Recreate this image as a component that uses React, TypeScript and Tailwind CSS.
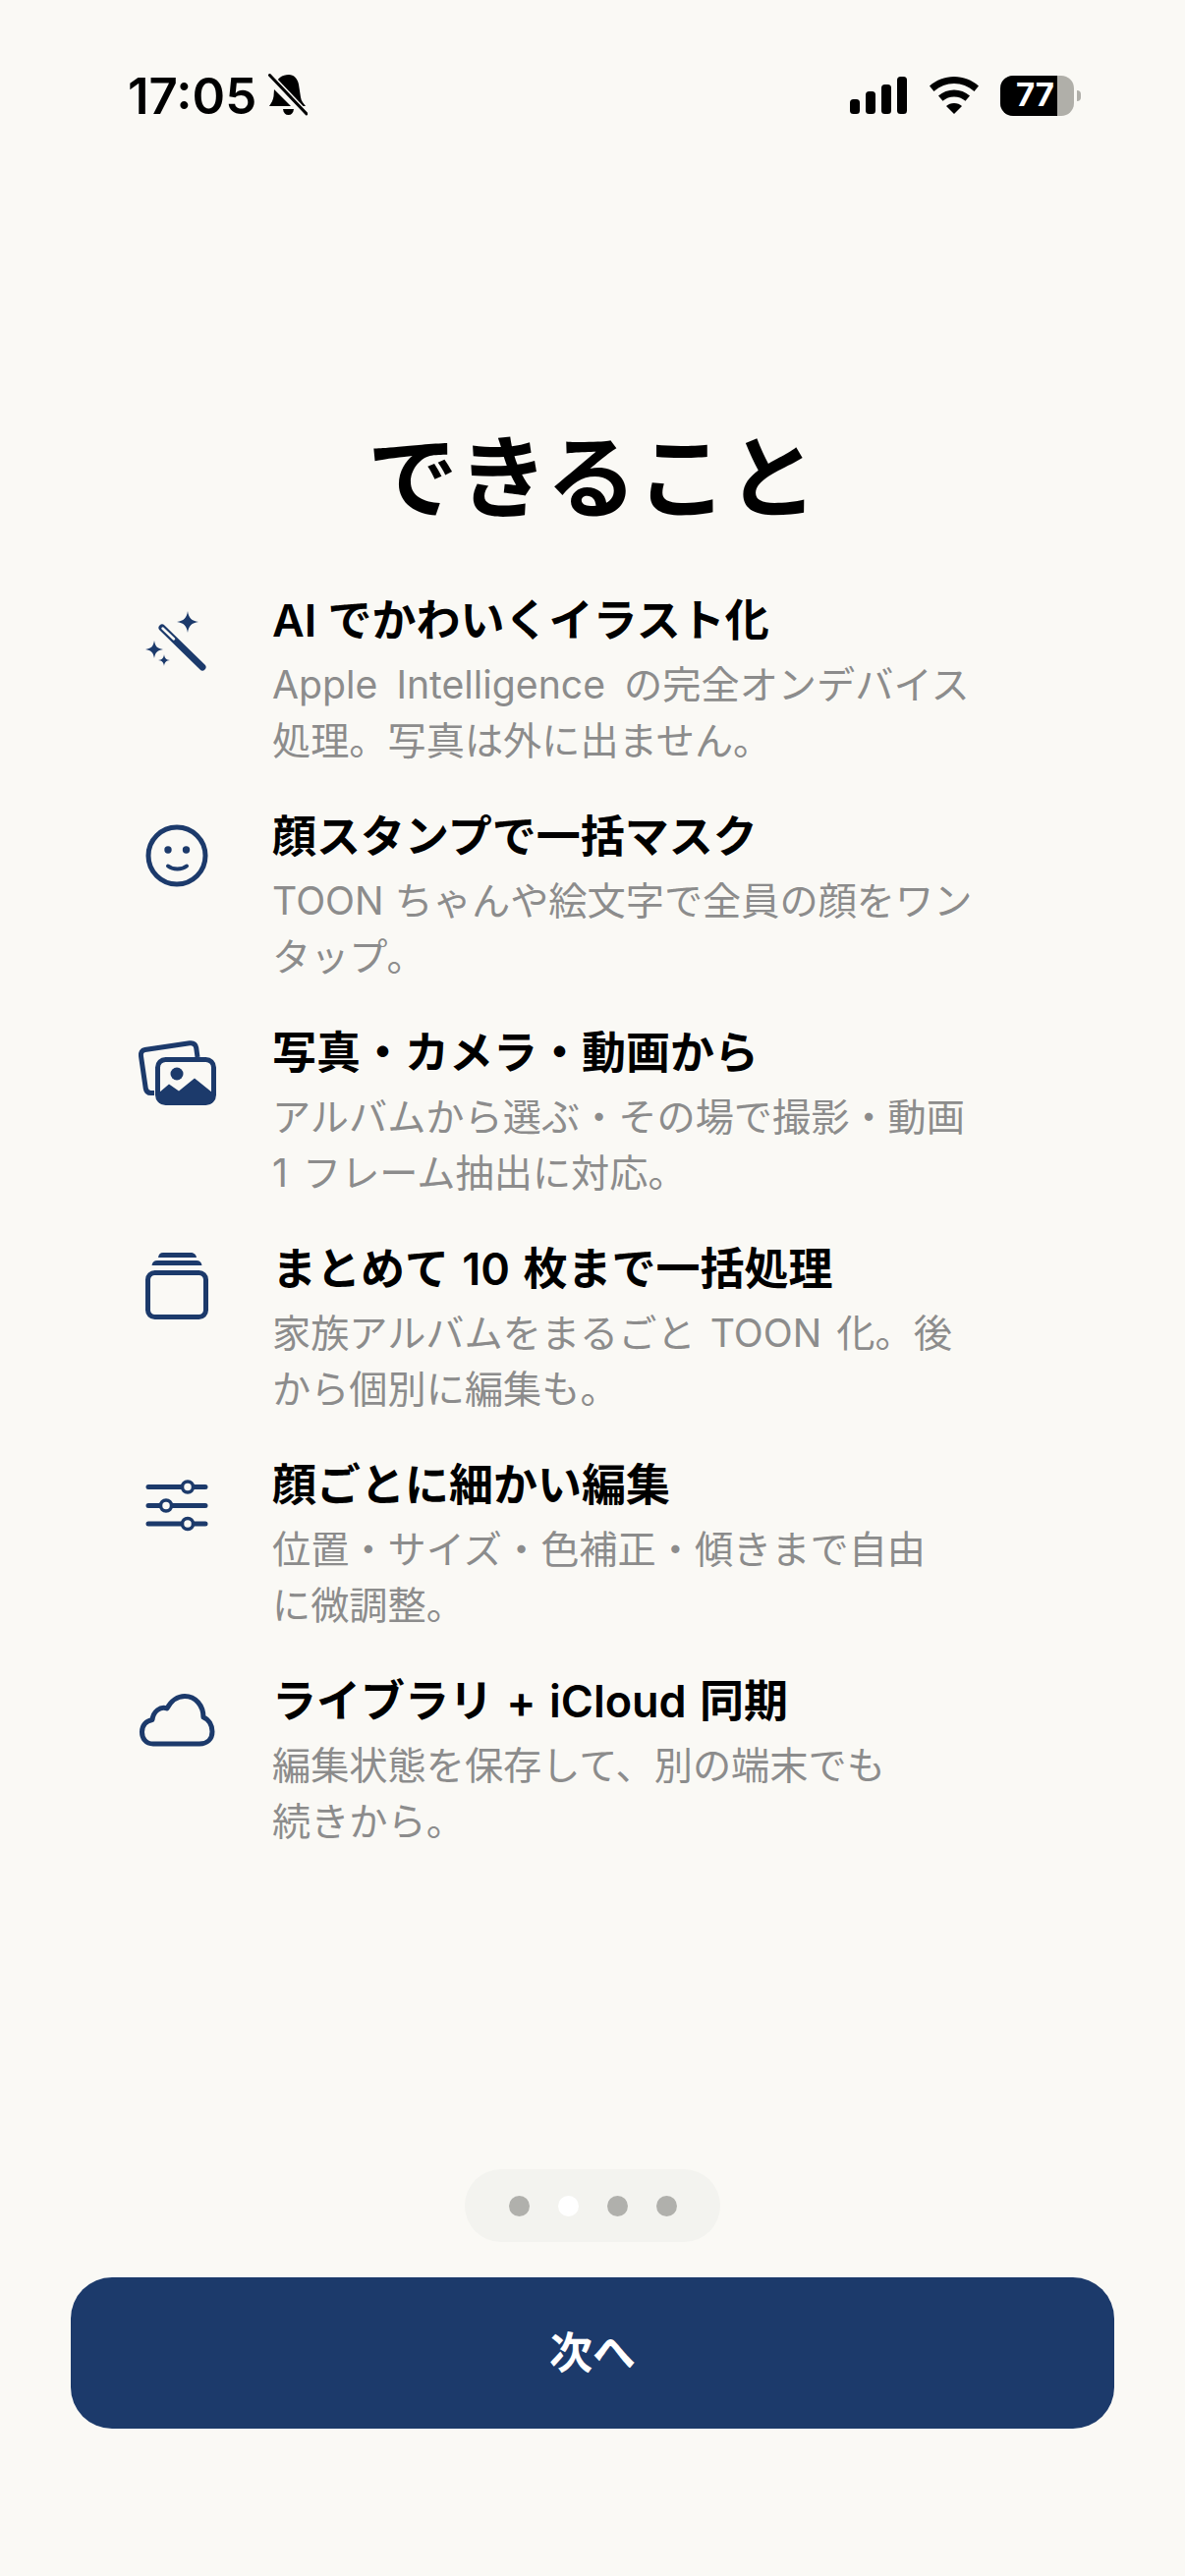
const features = [
  {
    title: "AI でかわいくイラスト化",
    lines: ["Apple Intelligence の完全オンデバイス", "処理。写真は外に出ません。"],
    titleClass: "",
    lineClass: "[word-spacing:8px]",
    icon: <WandIcon />,
  },
  {
    title: "顔スタンプで一括マスク",
    lines: ["TOON ちゃんや絵文字で全員の顔をワン", "タップ。"],
    titleClass: "",
    lineClass: "",
    icon: <SmileIcon />,
  },
  {
    title: "写真・カメラ・動画から",
    lines: ["アルバムから選ぶ・その場で撮影・動画", "1 フレーム抽出に対応。"],
    titleClass: "",
    lineClass: "[word-spacing:4px]",
    icon: <PhotosIcon />,
  },
  {
    title: "まとめて 10 枚まで一括処理",
    lines: ["家族アルバムをまるごと TOON 化。後", "から個別に編集も。"],
    titleClass: "[word-spacing:2px]",
    lineClass: "[word-spacing:4px]",
    icon: <StackIcon />,
  },
  {
    title: "顔ごとに細かい編集",
    lines: ["位置・サイズ・色補正・傾きまで自由", "に微調整。"],
    titleClass: "",
    lineClass: "",
    icon: <SlidersIcon />,
  },
  {
    title: "ライブラリ + iCloud 同期",
    lines: ["編集状態を保存して、別の端末でも", "続きから。"],
    titleClass: "[word-spacing:2px]",
    lineClass: "",
    icon: <CloudIcon />,
  },
];

function WandIcon() {
  return (
    <svg viewBox="130 600 100 100" className="w-[100px] h-[100px] text-[#1c3a6b]" fill="currentColor">
      <path d="M191 620 C192 627 195 630 202 631 C195 632 192 635 191 642 C190 635 187 632 180 631 C187 630 190 627 191 620Z" />
      <path d="M157 650 C158 656 160 658 166 659 C160 660 158 662 157 668 C156 662 154 660 148 659 C154 658 156 656 157 650Z" />
      <path d="M167 664 C167.500 668 169 669.500 173 670 C169 670.500 167.500 672 167 676 C166.500 672 165 670.500 161 670 C165 669.500 166.500 668 167 664Z" />
      <path d="M165 637 L206 677" stroke="currentColor" strokeWidth="7" strokeLinecap="round" />
      <path d="M165.500 637.500 L177 648.500" stroke="#faf9f5" strokeWidth="2.500" strokeLinecap="round" />
    </svg>
  );
}

function SmileIcon() {
  return (
    <svg viewBox="130 821 100 100" className="w-[100px] h-[100px] text-[#1c3a6b]" fill="none" stroke="currentColor" strokeWidth="5">
      <circle cx="180" cy="870" r="29" />
      <circle cx="171" cy="864" r="3.700" fill="currentColor" stroke="none" />
      <circle cx="189.500" cy="864" r="3.700" fill="currentColor" stroke="none" />
      <path d="M171 880.500 C176 884.500 185 884.500 190 880.500" strokeLinecap="round" strokeWidth="4" />
    </svg>
  );
}

function PhotosIcon() {
  return (
    <svg viewBox="130 1041 100 100" className="w-[100px] h-[100px] text-[#1c3a6b]" fill="none" stroke="currentColor" strokeWidth="5">
      <path d="M157 1111.500 L153.500 1111.500 C150.500 1111.500 148.800 1110 148.300 1107 L143.500 1074 C143 1070.500 144.500 1068 147.500 1067.500 L193 1060.800 C196.800 1060.300 199 1062 199.700 1065.500 L201 1075" strokeLinejoin="round" />
      <rect x="160.500" y="1077.500" width="57" height="44" rx="8" />
      <circle cx="180" cy="1092" r="6.500" fill="currentColor" stroke="none" />
      <path d="M162 1111 L172 1102.500 L182 1109.500 L198 1096.500 L216 1111 L216 1122 L162 1122Z" fill="currentColor" stroke="none" />
    </svg>
  );
}

function StackIcon() {
  return (
    <svg viewBox="130 1261 100 100" className="w-[100px] h-[100px] text-[#1c3a6b]" fill="none" stroke="currentColor" strokeWidth="5">
      <rect x="150.500" y="1294.500" width="59" height="45" rx="7" />
      <path d="M154.500 1287 C155 1283.500 157 1282 160 1282 L200 1282 C203 1282 205 1283.500 205.500 1287Z" fill="currentColor" stroke="none" />
      <path d="M161 1279 C161.500 1275.500 163 1274 166 1274 L194 1274 C197 1274 199.500 1275.500 200 1279Z" fill="currentColor" stroke="none" />
    </svg>
  );
}

function SlidersIcon() {
  return (
    <svg viewBox="130 1480 100 100" className="w-[100px] h-[100px] text-[#1c3a6b]" fill="none" stroke="currentColor" strokeWidth="5" strokeLinecap="round">
      <path d="M151 1511.500 H209 M151 1530.500 H209 M151 1549 H209" />
      <circle cx="191" cy="1511.500" r="5.500" fill="#faf9f5" strokeWidth="3.500" />
      <circle cx="169" cy="1530.500" r="5.500" fill="#faf9f5" strokeWidth="3.500" />
      <circle cx="191" cy="1549" r="5.500" fill="#faf9f5" strokeWidth="3.500" />
    </svg>
  );
}

function CloudIcon() {
  return (
    <svg viewBox="130 1701 100 100" className="w-[100px] h-[100px] text-[#1c3a6b]" fill="none" stroke="currentColor" strokeWidth="5" strokeLinejoin="round">
      <path d="M156 1774 C148 1774 144.500 1768 144.500 1762 C144.500 1755 149 1750.500 155 1749.500 C156 1741 163 1735.500 170 1738 C174 1730 181 1725.500 188 1725.500 C199 1725.500 207 1735 207 1747 C212.500 1749 216 1755 216 1761.500 C216 1769 211 1774 203 1774 Z" />
    </svg>
  );
}

function StatusBar() {
  return (
    <div className="flex items-center justify-between h-[42px] mt-[76px] pl-[130px] pr-[106px] text-black">
      <div className="flex items-center gap-[12px]">
        <span className="text-[51px] leading-none font-semibold font-['Inter',sans-serif]">17:05</span>
        <svg viewBox="0 0 40 44" className="w-[40px] h-[44px]" fill="currentColor">
          <path d="M21 1 C26 1 30 5 31 11 L33 24 C33.500 28 36 30 38 33 L30 33 L7 11 C9 5 14 1 21 1Z" />
          <path d="M6 16 L23 33 L1 33 C3 30 5 27 5.500 23Z" />
          <path d="M15 36 H26 C25.500 40 23.500 42 20.500 42 C17.500 42 15.500 40 15 36Z" />
          <path d="M2 2 L39 41" stroke="#faf9f5" strokeWidth="6" />
          <path d="M1.500 1.500 L39 41" stroke="currentColor" strokeWidth="3" strokeLinecap="round" />
        </svg>
      </div>
      <div className="flex items-center">
        <svg viewBox="0 0 58 38" className="w-[58px] h-[38px]" fill="currentColor">
          <rect x="0" y="23" width="10" height="15" rx="3.500" />
          <rect x="16" y="15" width="10" height="23" rx="3.500" />
          <rect x="32" y="8" width="10" height="30" rx="3.500" />
          <rect x="48" y="0" width="10" height="38" rx="3.500" />
        </svg>
        <svg viewBox="0 0 50 38" className="w-[50px] h-[38px] ml-[23px]" fill="currentColor">
          <path d="M25 0 C34.500 0 43 3.500 50 9.500 L45.500 15 C39.500 9.800 32.500 7 25 7 C17.500 7 10.500 9.800 4.500 15 L0 9.500 C7 3.500 15.500 0 25 0Z" />
          <path d="M25 13.500 C31 13.500 36.500 15.700 41 19.500 L36.500 24.800 C33.200 22 29.300 20.500 25 20.500 C20.700 20.500 16.800 22 13.500 24.800 L9 19.500 C13.500 15.700 19 13.500 25 13.500Z" />
          <path d="M25 27 C28.300 27 30.800 28 33 30 L25 38 L17 30 C19.200 28 21.700 27 25 27Z" />
        </svg>
        <div className="relative w-[75px] h-[41px] ml-[22px] rounded-[13px] overflow-hidden bg-[#b0afa9]">
          <div className="w-[58px] h-full bg-black" />
          <div className="absolute inset-0 flex items-center justify-center pr-[4px] text-white text-[33px] font-bold font-['Inter',sans-serif]">77</div>
        </div>
        <div className="w-[4px] h-[11px] ml-[3px] rounded-r-full bg-[#b0afa9]" />
      </div>
    </div>
  );
}

export default function App() {
  return (
    <div className="flex flex-col w-[1206px] h-[2622px] bg-[#faf9f5] font-['Inter','Noto_Sans_CJK_JP',sans-serif]">
      <StatusBar />

      <h1 className="mt-[309px] h-[120px] text-center text-[92px] leading-[120px] font-bold text-black">できること</h1>

      <div className="flex flex-col gap-[47px] mt-[55px] pl-[130px]">
        {features.map((f) => (
          <div key={f.title} className="flex h-[173px]">
            <div className="w-[100px] shrink-0">{f.icon}</div>
            <div className="ml-[47px]">
              <div className={`text-[45px] leading-[60px] font-semibold text-black whitespace-nowrap ${f.titleClass}`}>{f.title}</div>
              <div className="mt-[7px] text-[39.2px] leading-[56.5px] text-[#8c8c8c] whitespace-nowrap">
                {f.lines.map((line) => (
                  <div key={line} className={f.lineClass}>{line}</div>
                ))}
              </div>
            </div>
          </div>
        ))}
      </div>

      {/* page dots */}
      <div className="flex justify-center mt-auto">
        <div className="flex items-center justify-center gap-[29px] w-[260px] h-[74px] rounded-full bg-[#f3f3ef]">
          <span className="w-[21px] h-[21px] rounded-full bg-[#b0b0ac]" />
          <span className="w-[21px] h-[21px] rounded-full bg-white" />
          <span className="w-[21px] h-[21px] rounded-full bg-[#b0b0ac]" />
          <span className="w-[21px] h-[21px] rounded-full bg-[#b0b0ac]" />
        </div>
      </div>

      <div className="mt-[36px] mb-[150px] px-[72px]">
        <button className="w-full h-[154px] rounded-[42px] bg-[#1c3a6b] text-white text-[44px] font-semibold">次へ</button>
      </div>
    </div>
  );
}
